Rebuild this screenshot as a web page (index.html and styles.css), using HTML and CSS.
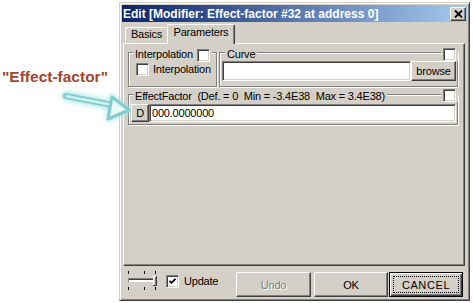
FILE: index.html
```html
<!DOCTYPE html>
<html>
<head>
<meta charset="utf-8">
<link rel="stylesheet" href="styles.css">
</head>
<body>
<div class="canvas">
  <div class="callout">"Effect-factor"</div>

  <div class="window">
    <div class="titlebar">
      <span class="title-text">Edit [Modifier: Effect-factor #32 at address 0]</span>
      <span class="close-btn"><svg width="9" height="8" viewBox="0 0 9 8"><path d="M1 0.5 L8 7.5 M8 0.5 L1 7.5" stroke="#000" stroke-width="1.8"/></svg></span>
    </div>

    <div class="tabs">
      <div class="tab">Basics</div>
      <div class="tab tab-active">Parameters</div>
    </div>

    <div class="panel">
      <div class="group-row">
        <div class="group group-interp">
          <div class="group-title">Interpolation<span class="check title-check"></span></div>
          <div class="check-row"><span class="check"></span><span>Interpolation</span></div>
        </div>
        <div class="group group-curve">
          <div class="group-title title-curve">Curve</div>
          <span class="check group-check"></span>
          <div class="field-row">
            <div class="textbox curve-box"></div>
            <div class="btn browse-btn">browse</div>
          </div>
        </div>
      </div>
      <div class="group group-effect">
        <div class="group-title">EffectFactor  (Def. = 0  Min = -3.4E38  Max = 3.4E38)</div>
        <span class="check group-check effect-check"></span>
        <div class="field-row">
          <div class="btn d-btn">D</div>
          <div class="textbox value-box">000.0000000</div>
        </div>
      </div>
    </div>

    <div class="bottombar">
      <svg class="slider" width="32" height="20" viewBox="0 0 32 20">
        <g fill="#000">
          <rect x="1" y="0" width="1" height="3"/>
          <rect x="17" y="0" width="1" height="3"/>
          <rect x="28" y="0" width="1" height="3"/>
          <rect x="1" y="16" width="1" height="3"/>
          <rect x="17" y="16" width="1" height="3"/>
          <rect x="28" y="16" width="1" height="3"/>
        </g>
        <rect x="1" y="7" width="26" height="4" fill="#fff"/>
        <rect x="1" y="7" width="26" height="1" fill="#808080"/>
        <rect x="1" y="8" width="26" height="1" fill="#404040"/>
        <rect x="1" y="7" width="1" height="4" fill="#808080"/>
        <rect x="26" y="5" width="4" height="10" fill="#d4d0c8"/>
        <rect x="26" y="5" width="4" height="1" fill="#fff"/>
        <rect x="26" y="5" width="1" height="10" fill="#fff"/>
        <rect x="29" y="5" width="1" height="10" fill="#404040"/>
        <rect x="26" y="14" width="4" height="1" fill="#404040"/>
        <rect x="28" y="6" width="1" height="8" fill="#808080"/>
      </svg>
      <span class="check update-check"><svg width="9" height="9" viewBox="0 0 9 9"><path d="M1.5 3.8 L3.5 5.8 L7.5 1.8" stroke="#000" stroke-width="1.8" fill="none"/></svg></span>
      <span class="update-label">Update</span>
      <div class="buttons">
        <div class="btn btn-undo">Undo</div>
        <div class="btn btn-ok">OK</div>
        <div class="btn btn-default"><span class="focus">CANCEL</span></div>
      </div>
    </div>
  </div>

  <svg class="arrow" width="85" height="45" viewBox="0 0 85 45">
    <defs>
      <filter id="glow" x="-20%" y="-40%" width="140%" height="180%">
        <feGaussianBlur stdDeviation="2.2"/>
      </filter>
      <filter id="soft" x="-10%" y="-20%" width="120%" height="140%">
        <feGaussianBlur stdDeviation="0.6"/>
      </filter>
    </defs>
    <g filter="url(#glow)" opacity="0.75">
      <path d="M11 14 L56 23" stroke="#a6e2e2" stroke-width="10" stroke-linecap="round"/>
      <polygon points="57,15 74,28 53,37" fill="#a6e2e2" stroke="#a6e2e2" stroke-width="6" stroke-linejoin="round"/>
    </g>
    <g filter="url(#soft)">
      <path d="M11 14 L55 22.5" stroke="#80cccc" stroke-width="6" stroke-linecap="round"/>
      <path d="M12 14.2 L55 22.5" stroke="#cdf0f0" stroke-width="2.5" stroke-linecap="round"/>
      <polygon points="57,15 74,28 53,37" fill="#eaf9f9" stroke="#80cccc" stroke-width="3" stroke-linejoin="round"/>
    </g>
  </svg>
</div>
</body>
</html>
```

FILE: styles.css
```css
* {
  box-sizing: border-box;
}

body {
  margin: 0;
  background: #fff;
  font-family: "Liberation Sans", Arial, sans-serif;
  font-size: 11px;
  letter-spacing: -0.2px;
  color: #000;
}

.canvas {
  position: relative;
  width: 473px;
  height: 303px;
  overflow: hidden;
}

.callout {
  position: absolute;
  left: 2px;
  top: 68px;
  font-size: 15.5px;
  font-weight: bold;
  letter-spacing: 0;
  color: #a3472b;
  white-space: nowrap;
}

.arrow {
  position: absolute;
  left: 55px;
  top: 82px;
  z-index: 5;
}

.window {
  position: absolute;
  left: 119px;
  top: 2px;
  width: 351px;
  height: 299px;
  background: #d4d0c8;
  border: 1px solid;
  border-color: #d4d0c8 #404040 #404040 #d4d0c8;
  box-shadow: inset 1px 1px #fff, inset -1px -1px #808080;
  padding: 2px;
  display: flex;
  flex-direction: column;
}

.titlebar {
  height: 17px;
  flex: none;
  background: linear-gradient(to right, #0a246a, #a6caf0);
  display: flex;
  align-items: center;
  padding: 0 1px 0 1px;
}

.title-text {
  flex: 1;
  color: #fff;
  font-weight: bold;
  font-size: 12px;
  letter-spacing: 0;
  white-space: nowrap;
}

.close-btn {
  width: 16px;
  height: 14px;
  background: #d4d0c8;
  border: 1px solid;
  border-color: #fff #404040 #404040 #fff;
  box-shadow: inset -1px -1px #808080;
  display: flex;
  align-items: center;
  justify-content: center;
}

.tabs {
  display: flex;
  align-items: flex-end;
  height: 20px;
  flex: none;
  margin-top: 2px;
  margin-bottom: -1px;
  padding-left: 3px;
  position: relative;
  z-index: 1;
}

.tab {
  width: 42px;
  height: 16px;
  margin-bottom: 1px;
  border-left: 1px solid #fff;
  border-top: 1px solid #fff;
  border-radius: 2px 2px 0 0;
  text-align: center;
  line-height: 13px;
}

.tab-active {
  width: 68px;
  height: 20px;
  margin-bottom: 0;
  padding-top: 1px;
  border-right: 1px solid #404040;
  box-shadow: inset -1px 0 #808080;
  background: #d4d0c8;
}

.panel {
  height: 223px;
  flex: none;
  margin: 0 2px 0 1px;
  border: 1px solid;
  border-color: #fff #404040 #404040 #fff;
  box-shadow: inset -1px -1px #808080;
  padding: 8px 0 0 4px;
}

.group-row {
  display: flex;
  gap: 2px;
}

.group {
  position: relative;
  border: 1px solid #808080;
  box-shadow: inset 1px 1px #fff, 1px 1px #fff;
}

.group-title {
  position: absolute;
  top: -5px;
  left: 4px;
  padding: 0 2px;
  background: #d4d0c8;
  line-height: 13px;
  white-space: pre;
  display: flex;
  align-items: flex-start;
}

.title-curve {
  left: 5px;
}

.title-check {
  margin-left: 4px;
  margin-top: 1px;
}

.check {
  display: inline-flex;
  align-items: center;
  justify-content: center;
  flex: none;
  width: 13px;
  height: 13px;
  background: #fff;
  border: 1px solid;
  border-color: #808080 #fff #fff #808080;
  box-shadow: inset 1px 1px #404040, inset -1px -1px #d4d0c8;
}

.group-check {
  position: absolute;
  top: -5px;
  right: 1px;
  box-shadow: inset 1px 1px #404040, inset -1px -1px #d4d0c8, -2px 0 #d4d0c8, 2px 0 #d4d0c8;
}

.effect-check {
  top: -6px;
}

.group-interp {
  width: 89px;
  height: 35px;
  padding: 10px 0 0 7px;
}

.check-row {
  display: flex;
  align-items: center;
  gap: 4px;
  line-height: 13px;
}

.group-curve {
  width: 239px;
  height: 35px;
  padding: 8px 1px 0 2px;
}

.group-effect {
  width: 330px;
  height: 31px;
  margin-top: 7px;
  padding: 9px 1px 0 2px;
}

.field-row {
  display: flex;
}

.textbox {
  background: #fff;
  border: 1px solid;
  border-color: #808080 #fff #fff #808080;
  box-shadow: inset 1px 1px #404040, inset -1px -1px #d4d0c8;
  display: flex;
  align-items: center;
  padding-left: 2px;
}

.curve-box {
  width: 189px;
  height: 20px;
}

.value-box {
  flex: 1;
  height: 18px;
}

.btn {
  background: #d4d0c8;
  border: 1px solid;
  border-color: #fff #404040 #404040 #fff;
  box-shadow: inset -1px -1px #808080;
  display: flex;
  align-items: center;
  justify-content: center;
}

.browse-btn {
  width: 45px;
  height: 20px;
}

.d-btn {
  width: 18px;
  height: 18px;
}

.bottombar {
  flex: 1;
  display: flex;
  align-items: flex-start;
  padding: 6px 4px 0 5px;
}

.slider {
  margin-top: -1px;
  flex: none;
}

.update-check {
  margin-left: 7px;
  margin-top: 3px;
}

.update-label {
  margin-left: 5px;
  margin-top: 3px;
  line-height: 13px;
}

.buttons {
  margin-left: auto;
  display: flex;
}

.buttons .btn {
  height: 25px;
}

.btn-undo {
  width: 75px;
  margin-right: 3px;
  color: #808080;
  text-shadow: 1px 1px #fff;
}

.btn-ok {
  width: 74px;
  margin-right: 1px;
}

.btn-default {
  width: 74px;
  border-color: #000;
  box-shadow: inset 1px 1px #fff, inset -1px -1px #404040, inset -2px -2px #808080;
  padding: 3px;
}

.focus {
  flex: 1;
  align-self: stretch;
  border: 1px dotted #000;
  display: flex;
  align-items: center;
  justify-content: center;
  letter-spacing: 0.6px;
}
```
